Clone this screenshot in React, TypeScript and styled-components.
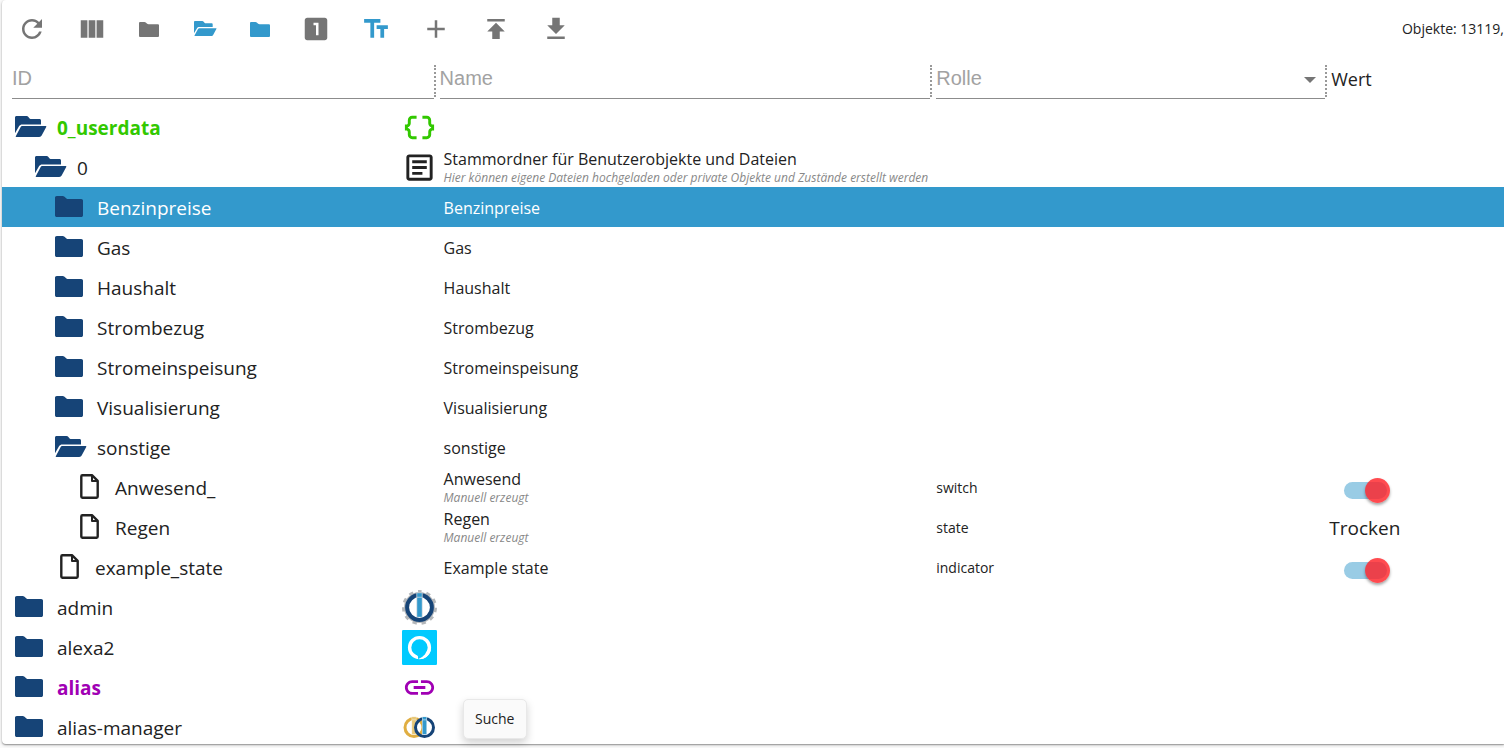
import React from 'react';
import styled, { createGlobalStyle } from 'styled-components';

const GlobalStyle = createGlobalStyle`
  *, *::before, *::after { box-sizing: border-box; }
  body {
    margin: 0;
    background: #fafafa;
    color: #222;
    font-family: 'Open Sans', 'Noto Sans', sans-serif;
    overflow: hidden;
  }
`;

const NAVY = '#164477';
const BLUE = '#3399cc';
const GREY = '#757575';

const Page = styled.main`
  position: relative;
  height: 100vh;
  padding: 0 0 4px 2px;
`;

const Card = styled.section`
  display: flex;
  flex-direction: column;
  height: 100%;
  overflow: hidden;
  background: #fff;
  border-radius: 4px 0 0 4px;
  box-shadow: 0 1px 3px rgba(0, 0, 0, 0.3), 0 1px 1px rgba(0, 0, 0, 0.2);
`;

const Toolbar = styled.header`
  display: flex;
  flex: none;
  align-items: center;
  gap: 12px;
  height: 58px;
  padding-left: 6px;
`;

const ToolButton = styled.button<{ $width?: number; $active?: boolean }>`
  display: flex;
  flex: none;
  align-items: center;
  justify-content: center;
  width: ${(p) => p.$width ?? 48}px;
  height: 48px;
  padding: 0;
  border: 0;
  background: none;
  color: ${(p) => (p.$active ? BLUE : GREY)};
  cursor: pointer;
`;

const Summary = styled.span`
  margin-left: auto;
  font-size: 14px;
  line-height: 20px;
  white-space: nowrap;
`;

const TreeArea = styled.div`
  flex: 1;
  min-height: 0;
  overflow: hidden;
`;

const TreeTable = styled.table`
  width: 100%;
  table-layout: fixed;
  border-collapse: collapse;

  th, td {
    padding: 0;
    text-align: left;
    font-weight: 400;
    white-space: nowrap;
  }
`;

const Column = styled.col<{ $width?: string }>`
  width: ${(p) => p.$width ?? 'auto'};
`;

const HeadCell = styled.th`
  height: 49px;
  vertical-align: top;
`;

const HeadInner = styled.div<{ $indent: number }>`
  position: relative;
  display: flex;
  align-items: flex-start;
  height: 41px;
  padding-left: ${(p) => p.$indent}px;
`;

const fieldText = `
  flex: 1;
  min-width: 0;
  height: 41px;
  padding: 0;
  border: 0;
  border-bottom: 1px solid #8c8c8c;
  border-radius: 0;
  outline: 0;
  background: none;
  color: #a2a2a2;
  font: 20px 'Liberation Sans', Arial, sans-serif;
`;

const FilterInput = styled.input`
  ${fieldText}
  &::placeholder { color: #a2a2a2; opacity: 1; }
`;

const FilterSelect = styled.select`
  ${fieldText}
  appearance: none;
`;

const Caret = styled.svg`
  position: absolute;
  right: 12px;
  top: 19px;
  pointer-events: none;
`;

const Divider = styled.span<{ $gap: number }>`
  flex: none;
  width: 2px;
  height: 32px;
  margin: 7px ${(p) => p.$gap}px 0 0;
  border-left: 2px dotted #999;
`;

const HeadLabel = styled.div`
  padding: 7px 0 0 3px;
  font-size: 18px;
  line-height: 28px;
`;

const Row = styled.tr<{ $selected?: boolean }>`
  background: ${(p) => (p.$selected ? BLUE : 'transparent')};
  color: ${(p) => (p.$selected ? '#fff' : 'inherit')};
`;

const Cell = styled.td`
  height: 40px;
`;

const IdCell = styled.div<{ $level: number }>`
  display: flex;
  align-items: center;
  height: 40px;
  padding: 0 1px 0 ${(p) => 13 + p.$level * 20}px;
`;

const NodeIcon = styled.span<{ $doc: boolean }>`
  display: flex;
  flex: none;
  width: ${(p) => (p.$doc ? 40 : 42)}px;
  padding: 0 0 1px ${(p) => (p.$doc ? 5 : 0)}px;
  color: ${(p) => (p.$doc ? '#222' : NAVY)};
`;

const NodeId = styled.span<{ $color?: string }>`
  flex: 1;
  padding-top: 2px;
  font-size: 19px;
  line-height: 28px;
  font-weight: ${(p) => (p.$color ? 700 : 400)};
  color: ${(p) => p.$color ?? 'inherit'};
`;

const AdapterIcon = styled.span<{ $color?: string }>`
  display: flex;
  flex: none;
  width: 35px;
  height: 35px;
  color: ${(p) => p.$color ?? '#222'};
`;

const NameCell = styled.div`
  display: flex;
  flex-direction: column;
  justify-content: center;
  height: 40px;
  padding: 2px 0 0 6px;
  overflow: hidden;
`;

const NameText = styled.div`
  font-size: 16px;
  line-height: 20px;
`;

const Description = styled.div`
  font-size: 12px;
  line-height: 18px;
  font-style: italic;
  color: #888;
`;

const RoleText = styled.span`
  font-size: 14px;
  line-height: 20px;
`;

const ValueText = styled.div`
  padding: 2px 0 0 1px;
  font-size: 19px;
  line-height: 28px;
`;

const Switch = styled.input`
  appearance: none;
  display: block;
  position: relative;
  width: 43px;
  height: 17px;
  margin: 6px 0 0 16px;
  border-radius: 9px;
  background: #99cce5;

  &::before {
    content: '';
    position: absolute;
    top: -4px;
    right: -3px;
    width: 25px;
    height: 25px;
    border-radius: 50%;
    background: rgba(255, 30, 36, 0.8);
    box-shadow: 0 2px 3px rgba(0, 0, 0, 0.35);
  }
`;

const Tooltip = styled.div`
  position: absolute;
  left: 463px;
  bottom: 9px;
  padding: 9px 12px 9px 11px;
  border: 1px solid #e8e8e8;
  border-radius: 5px;
  background: #fafafa;
  box-shadow: 0 4px 8px rgba(0, 0, 0, 0.18);
  font-size: 14px;
  line-height: 20px;
`;

const MaterialIcon = ({ d, size = 30 }: { d: string; size?: number }) => (
  <svg width={size} height={size} viewBox="0 0 24 24" fill="currentColor" aria-hidden="true">
    <path d={d} />
  </svg>
);

const ICONS = {
  refresh:
    'M17.65 6.35C16.2 4.9 14.21 4 12 4c-4.42 0-7.99 3.58-7.99 8s3.57 8 7.99 8c3.73 0 6.84-2.55 7.73-6h-2.08c-.82 2.33-3.04 4-5.65 4-3.31 0-6-2.69-6-6s2.69-6 6-6c1.66 0 3.14.69 4.22 1.78L13 11h7V4l-2.35 2.35z',
  columns: 'M14.67 5v14H9.33V5h5.34zm1 14H21V5h-5.33v14zm-7.34 0V5H3v14h5.33z',
  one: 'M19 3H5c-1.1 0-2 .9-2 2v14c0 1.1.9 2 2 2h14c1.1 0 2-.9 2-2V5c0-1.1-.9-2-2-2zm-5 14h-2V9h-2V7h4v10z',
  text: 'M2.5 4v3h5v12h3V7h5V4h-13zm19 5h-9v3h3v7h3v-7h3V9z',
  add: 'M19 13h-6v6h-2v-6H5v-2h6V5h2v6h6v2z',
  publish: 'M5 4v2h14V4H5zm0 10h4v6h6v-6h4l-7-7-7 7z',
  download: 'M19 9h-4V3H9v6H5l7 7 7-7zM5 18v2h14v-2H5z',
  braces:
    'M4 7v2c0 .55-.45 1-1 1H2v4h1c.55 0 1 .45 1 1v2c0 1.65 1.35 3 3 3h3v-2H7c-.55 0-1-.45-1-1v-2c0-1.3-.84-2.42-2-2.83v-.34C5.16 11.42 6 10.3 6 9V7c0-.55.45-1 1-1h3V4H7C5.35 4 4 5.35 4 7zm17 3c-.55 0-1-.45-1-1V7c0-1.65-1.35-3-3-3h-3v2h3c.55 0 1 .45 1 1v2c0 1.3.84 2.42 2 2.83v.34c-1.16.41-2 1.52-2 2.83v2c0 .55-.45 1-1 1h-3v2h3c1.65 0 3-1.35 3-3v-2c0-.55.45-1 1-1h1v-4h-1z',
  article:
    'M19 5v14H5V5h14m0-2H5c-1.1 0-2 .9-2 2v14c0 1.1.9 2 2 2h14c1.1 0 2-.9 2-2V5c0-1.1-.9-2-2-2zM14 17H7v-2h7v2zm3-4H7v-2h10v2zm0-4H7V7h10v2z',
  link: 'M3.9 12c0-1.71 1.39-3.1 3.1-3.1h4V7H7c-2.76 0-5 2.24-5 5s2.24 5 5 5h4v-1.9H7c-1.71 0-3.1-1.39-3.1-3.1zM8 13h8v-2H8v2zm9-6h-4v1.9h4c1.71 0 3.1 1.39 3.1 3.1s-1.39 3.1-3.1 3.1h-4V17h4c2.76 0 5-2.24 5-5s-2.24-5-5-5z',
};

const FolderIcon = ({ width = 28 }: { width?: number }) => (
  <svg width={width} height={(width * 3) / 4} viewBox="0 0 28 21" fill="currentColor" aria-hidden="true">
    <path d="M1.8 0H7.6C8.4 0 8.9.3 9.5.8L11.4 2.4C12.1 2.9 12.6 3 13.3 3H26.2C27.3 3 28 3.7 28 4.8V19.2C28 20.3 27.3 21 26.2 21H1.8C.7 21 0 20.3 0 19.2V1.8C0 .7.7 0 1.8 0Z" />
  </svg>
);

const FolderOpenIcon = ({ width = 32 }: { width?: number }) => (
  <svg width={width} height={(width * 21) / 32} viewBox="0 0 32 21" fill="currentColor" aria-hidden="true">
    <path d="M1.6 0H11.5C12.4 0 12.9.3 13.4.9L14.6 2.4C15.1 2.9 15.6 3.1 16.3 3.1H24.4C25.5 3.1 26 3.7 26 4.7V8.4H7.4C5.8 8.4 4.8 9 4 10.3L0 17.2V1.6C0 .6.6 0 1.6 0Z" />
    <path d="M7.6 10H30.4C31.3 10 31.6 10.5 31.1 11.3L26.8 19.3C26.1 20.5 25.5 21 24.2 21H1.5C.7 21 .5 20.6.9 19.9L5.4 11.4C6 10.4 6.6 10 7.6 10Z" />
  </svg>
);

const DocumentIcon = () => (
  <svg width="19" height="25" viewBox="0 0 19 25" fill="none" stroke="currentColor" strokeWidth="2.4" strokeLinejoin="round" aria-hidden="true">
    <path d="M2.4 1.3H12.2L17.7 6.8V22.6Q17.7 23.7 16.6 23.7H2.4Q1.3 23.7 1.3 22.6V2.4Q1.3 1.3 2.4 1.3Z" />
    <path d="M12 1.5V7H17.5" strokeWidth="2" />
  </svg>
);

const AdminIcon = () => (
  <svg width="35" height="35" viewBox="0 0 35 35" fill="none" aria-hidden="true">
    <circle
      cx="17.5"
      cy="17.5"
      r="15.8"
      stroke="#b4b7ba"
      strokeWidth="3.4"
      strokeDasharray="4.2 4.825"
      strokeDashoffset="2.1"
      transform="rotate(-90 17.5 17.5)"
    />
    <circle cx="17.5" cy="17.5" r="14.8" stroke="#b4b7ba" strokeWidth="1.4" />
    <circle cx="17.5" cy="17.5" r="12.4" stroke={NAVY} strokeWidth="4" fill="#fff" />
    <rect x="14.4" y="2.6" width="6.2" height="24.6" fill="#c9d6e0" />
    <rect x="15.2" y="3.2" width="4.6" height="3.6" fill={BLUE} />
    <rect x="15.2" y="7.6" width="4.6" height="19.2" fill={BLUE} />
  </svg>
);

const AlexaIcon = () => (
  <svg width="35" height="35" viewBox="0 0 35 35" fill="none" aria-hidden="true">
    <rect width="35" height="35" rx="1.2" fill="#00caff" />
    <circle cx="17.5" cy="17.5" r="9.9" stroke="#fff" strokeWidth="3.4" />
    <path d="M13.6 24.6C15 25.2 16 25.6 16 26.8V29.4C19.8 28.2 22.6 26.6 24 23L20 20Z" fill="#00caff" />
    <path d="M16 29.1C19.6 27.6 23.8 25 25.3 20L28.9 19.6A11.6 11.6 0 0 1 16 29.1Z" fill="#fff" />
  </svg>
);

const AliasManagerIcon = () => (
  <svg width="35" height="35" viewBox="0 0 35 35" fill="none" aria-hidden="true">
    <circle cx="12" cy="17.5" r="9" stroke="#e0ae42" strokeWidth="3" />
    <rect x="9.6" y="6.6" width="4.8" height="18" fill="#f6ead0" />
    <rect x="10.1" y="7" width="3.8" height="2.6" fill="#e8c878" />
    <rect x="10.1" y="10.2" width="3.8" height="14" fill="#e8c878" />
    <circle cx="22.5" cy="17.5" r="9" stroke={NAVY} strokeWidth="3" />
    <rect x="20.1" y="6.6" width="4.8" height="18" fill="#dbe8f0" />
    <rect x="20.6" y="7" width="3.8" height="2.6" fill={BLUE} />
    <rect x="20.6" y="10.2" width="3.8" height="14" fill={BLUE} />
  </svg>
);

type TreeNode = {
  id: string;
  level: number;
  kind: 'open' | 'closed' | 'doc';
  name?: string;
  description?: string;
  role?: string;
  value?: string | boolean;
  color?: string;
  icon?: React.ReactNode;
  selected?: boolean;
};

const GREEN = '#32c800';
const PURPLE = '#a000b4';

const NODES: TreeNode[] = [
  { id: '0_userdata', level: 0, kind: 'open', color: GREEN, icon: <MaterialIcon d={ICONS.braces} size={35} /> },
  {
    id: '0',
    level: 1,
    kind: 'open',
    name: 'Stammordner für Benutzerobjekte und Dateien',
    description: 'Hier können eigene Dateien hochgeladen oder private Objekte und Zustände erstellt werden',
    icon: <MaterialIcon d={ICONS.article} size={35} />,
  },
  { id: 'Benzinpreise', level: 2, kind: 'closed', name: 'Benzinpreise', selected: true },
  { id: 'Gas', level: 2, kind: 'closed', name: 'Gas' },
  { id: 'Haushalt', level: 2, kind: 'closed', name: 'Haushalt' },
  { id: 'Strombezug', level: 2, kind: 'closed', name: 'Strombezug' },
  { id: 'Stromeinspeisung', level: 2, kind: 'closed', name: 'Stromeinspeisung' },
  { id: 'Visualisierung', level: 2, kind: 'closed', name: 'Visualisierung' },
  { id: 'sonstige', level: 2, kind: 'open', name: 'sonstige' },
  { id: 'Anwesend_', level: 3, kind: 'doc', name: 'Anwesend', description: 'Manuell erzeugt', role: 'switch', value: true },
  { id: 'Regen', level: 3, kind: 'doc', name: 'Regen', description: 'Manuell erzeugt', role: 'state', value: 'Trocken' },
  { id: 'example_state', level: 2, kind: 'doc', name: 'Example state', role: 'indicator', value: true },
  { id: 'admin', level: 0, kind: 'closed', icon: <AdminIcon /> },
  { id: 'alexa2', level: 0, kind: 'closed', icon: <AlexaIcon /> },
  { id: 'alias', level: 0, kind: 'closed', color: PURPLE, icon: <MaterialIcon d={ICONS.link} size={35} /> },
  { id: 'alias-manager', level: 0, kind: 'closed', icon: <AliasManagerIcon /> },
];

const NODE_SYMBOLS = {
  open: <FolderOpenIcon />,
  closed: <FolderIcon />,
  doc: <DocumentIcon />,
};

const TreeRow = ({ node }: { node: TreeNode }) => (
  <Row $selected={node.selected}>
    <Cell>
      <IdCell $level={node.level}>
        <NodeIcon $doc={node.kind === 'doc'}>{NODE_SYMBOLS[node.kind]}</NodeIcon>
        <NodeId $color={node.color}>{node.id}</NodeId>
        {node.icon && <AdapterIcon $color={node.color}>{node.icon}</AdapterIcon>}
      </IdCell>
    </Cell>
    <Cell>
      <NameCell>
        {node.name && <NameText>{node.name}</NameText>}
        {node.description && <Description>{node.description}</Description>}
      </NameCell>
    </Cell>
    <Cell>
      <RoleText>{node.role}</RoleText>
    </Cell>
    <Cell>
      {typeof node.value === 'string' && <ValueText>{node.value}</ValueText>}
      {typeof node.value === 'boolean' && (
        <Switch type="checkbox" role="switch" aria-label={node.id} defaultChecked={node.value} />
      )}
    </Cell>
  </Row>
);

export default function App() {
  return (
    <Page>
      <GlobalStyle />
      <Card>
        <Toolbar>
          <ToolButton aria-label="Aktualisieren"><MaterialIcon d={ICONS.refresh} /></ToolButton>
          <ToolButton aria-label="Spalten"><MaterialIcon d={ICONS.columns} /></ToolButton>
          <ToolButton $width={42} aria-label="Alle schließen"><FolderIcon width={20} /></ToolButton>
          <ToolButton $width={46} $active aria-label="Alle öffnen"><FolderOpenIcon width={23} /></ToolButton>
          <ToolButton $width={40} $active aria-label="Ebene schließen"><FolderIcon width={20} /></ToolButton>
          <ToolButton aria-label="Ebene 1"><MaterialIcon d={ICONS.one} /></ToolButton>
          <ToolButton $active aria-label="Beschreibungen"><MaterialIcon d={ICONS.text} /></ToolButton>
          <ToolButton aria-label="Hinzufügen"><MaterialIcon d={ICONS.add} /></ToolButton>
          <ToolButton aria-label="Hochladen"><MaterialIcon d={ICONS.publish} /></ToolButton>
          <ToolButton aria-label="Herunterladen"><MaterialIcon d={ICONS.download} /></ToolButton>
          <Summary>Objekte: 13119,</Summary>
        </Toolbar>
        <TreeArea>
          <TreeTable>
            <colgroup>
              <Column $width="29%" />
              <Column $width="33.2%" />
              <Column $width="26.1%" />
              <Column />
            </colgroup>
            <thead>
              <tr>
                <HeadCell>
                  <HeadInner $indent={10}>
                    <FilterInput aria-label="ID" placeholder="ID" />
                    <Divider $gap={2} />
                  </HeadInner>
                </HeadCell>
                <HeadCell>
                  <HeadInner $indent={2}>
                    <FilterInput aria-label="Name" placeholder="Name" />
                    <Divider $gap={4} />
                  </HeadInner>
                </HeadCell>
                <HeadCell>
                  <HeadInner $indent={0}>
                    <FilterSelect aria-label="Rolle">
                      <option>Rolle</option>
                    </FilterSelect>
                    <Caret width="12" height="6" viewBox="0 0 12 6" aria-hidden="true">
                      <path d="M0 0H12L6 6Z" fill={GREY} />
                    </Caret>
                    <Divider $gap={1} />
                  </HeadInner>
                </HeadCell>
                <HeadCell>
                  <HeadLabel>Wert</HeadLabel>
                </HeadCell>
              </tr>
            </thead>
            <tbody>
              {NODES.map((node) => (
                <TreeRow key={node.id} node={node} />
              ))}
            </tbody>
          </TreeTable>
        </TreeArea>
      </Card>
      <Tooltip role="tooltip">Suche</Tooltip>
    </Page>
  );
}
